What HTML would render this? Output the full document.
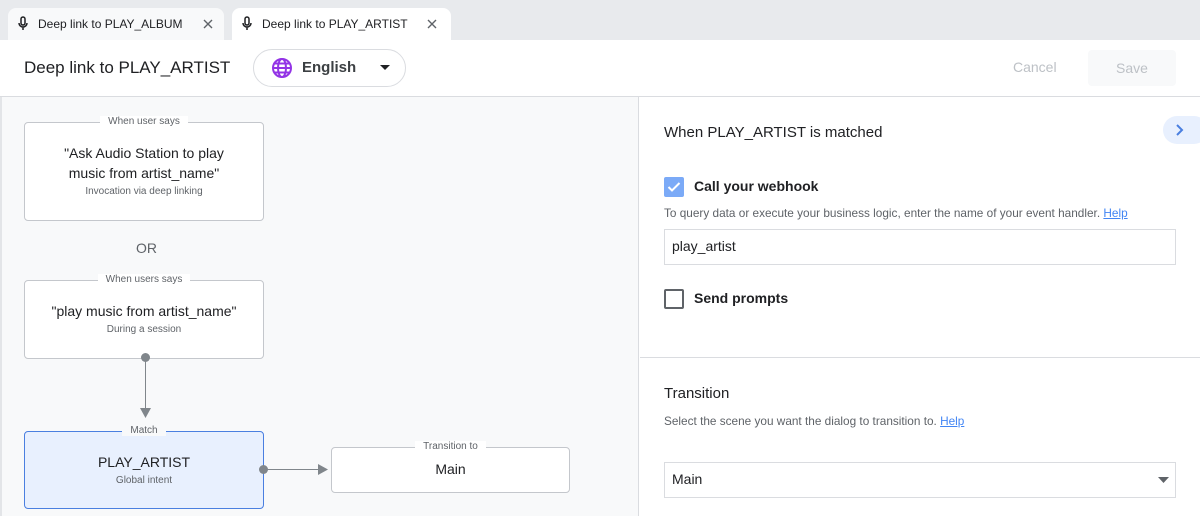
<!DOCTYPE html>
<html><head><style>
*{box-sizing:border-box;margin:0;padding:0}
body{width:1200px;height:516px;overflow:hidden;font-family:"Liberation Sans",sans-serif;color:#202124;background:#fff;position:relative}
.a{position:absolute}
.tab{position:absolute;top:8px;height:32px;border-radius:8px 8px 0 0;font-size:12px;line-height:32px;padding-left:30px}
.card{position:absolute;background:#fff;border:1px solid #c4c7cc;border-radius:4px;text-align:center}
.lbl{position:absolute;top:-7px;left:0;right:0;text-align:center;font-size:10px;color:#5f6368;line-height:12px}
.lbl span{background:#fff;padding:0 8px}
.sub{font-size:10px;color:#5f6368}
</style></head><body>
<div class="a" style="left:0;top:0;width:1200px;height:40px;background:#e8eaed"></div>
<div class="tab" style="left:8px;width:216px;background:#f8f9fa">Deep link to PLAY_ALBUM</div>
<div class="tab" style="left:232px;width:219px;background:#fff">Deep link to PLAY_ARTIST</div>
<svg class="a" style="left:17px;top:16px" width="12" height="16" viewBox="0 0 12 16"><rect x="4" y="1" width="4" height="8" rx="2" fill="none" stroke="#202124" stroke-width="1.5"/><path d="M2 7a4 4 0 0 0 8 0M6 11v3" fill="none" stroke="#202124" stroke-width="1.5"/></svg>
<svg class="a" style="left:241px;top:16px" width="12" height="16" viewBox="0 0 12 16"><rect x="4" y="1" width="4" height="8" rx="2" fill="none" stroke="#202124" stroke-width="1.5"/><path d="M2 7a4 4 0 0 0 8 0M6 11v3" fill="none" stroke="#202124" stroke-width="1.5"/></svg>
<svg class="a" style="left:202px;top:18px" width="12" height="12"><path d="M2 2l8 8M10 2l-8 8" stroke="#5f6368" stroke-width="1.4"/></svg>
<svg class="a" style="left:426px;top:18px" width="12" height="12"><path d="M2 2l8 8M10 2l-8 8" stroke="#5f6368" stroke-width="1.4"/></svg>
<div class="a" style="left:24px;top:58px;font-size:17px">Deep link to PLAY_ARTIST</div>
<div class="a" style="left:253px;top:49px;width:153px;height:38px;border:1px solid #dadce0;border-radius:19px"></div>
<svg class="a" style="left:271px;top:57px" width="22" height="22" viewBox="0 0 22 22"><g fill="none" stroke="#9334e6" stroke-width="2"><circle cx="11" cy="11" r="9"/><ellipse cx="11" cy="11" rx="4" ry="9"/><path d="M2 11h18M3.5 6.5h15M3.5 15.5h15"/></g></svg>
<div class="a" style="left:302px;top:59px;font-size:15px;font-weight:bold;color:#3c4043">English</div>
<svg class="a" style="left:379px;top:64px" width="12" height="7"><path d="M1 1h10L6 6z" fill="#202124"/></svg>
<div class="a" style="left:1013px;top:59px;font-size:14px;color:#bdc1c6">Cancel</div>
<div class="a" style="left:1088px;top:50px;width:88px;height:36px;background:#f8f9fa;border-radius:4px;font-size:14px;color:#bdc1c6;text-align:center;line-height:36px">Save</div>
<div class="a" style="left:0;top:96px;width:1200px;height:1px;background:#dadce0"></div>
<div class="a" style="left:0;top:97px;width:639px;height:419px;background:#f8f9fa;border-right:1px solid #dadce0;border-left:2px solid #e3e5e8"></div>

<div class="card" style="left:24px;top:122px;width:240px;height:99px;padding-top:20px">
<div class="lbl"><span>When user says</span></div>
<div style="font-size:14px;line-height:20px">"Ask Audio Station to play<br>music from artist_name"</div>
<div class="sub" style="margin-top:3px">Invocation via deep linking</div></div>
<div class="a" style="left:136px;top:240px;font-size:14px;color:#5f6368">OR</div>
<div class="card" style="left:24px;top:280px;width:240px;height:79px;padding-top:20px">
<div class="lbl"><span>When users says</span></div>
<div style="font-size:14px;line-height:20px">"play music from artist_name"</div>
<div class="sub" style="margin-top:3px">During a session</div></div>
<div class="a" style="left:141px;top:353px;width:9px;height:9px;border-radius:50%;background:#80868b"></div>
<div class="a" style="left:145px;top:358px;width:1px;height:54px;background:#80868b"></div>
<svg class="a" style="left:140px;top:408px" width="11" height="10"><path d="M0 0h11L5.5 10z" fill="#80868b"/></svg>
<div class="card" style="left:24px;top:431px;width:240px;height:78px;padding-top:20px;background:#e8f0fe;border-color:#4a7fe0">
<div class="lbl"><span style="background:#f8f9fa">Match</span></div>
<div style="font-size:14px;line-height:20px">PLAY_ARTIST</div>
<div class="sub" style="margin-top:3px">Global intent</div></div>
<div class="a" style="left:259px;top:465px;width:9px;height:9px;border-radius:50%;background:#80868b"></div>
<div class="a" style="left:264px;top:469px;width:58px;height:1px;background:#80868b"></div>
<svg class="a" style="left:318px;top:464px" width="10" height="11"><path d="M0 0v11l10-5.5z" fill="#80868b"/></svg>
<div class="card" style="left:331px;top:447px;width:239px;height:46px;padding-top:12px">
<div class="lbl"><span>Transition to</span></div>
<div style="font-size:14px;line-height:18px">Main</div></div>

<div class="a" style="left:664px;top:124px;font-size:15px">When PLAY_ARTIST is matched</div>
<div class="a" style="left:1163px;top:116px;width:45px;height:28px;background:#e8f0fe;border-radius:14px"></div>
<svg class="a" style="left:1175px;top:123px" width="10" height="14"><path d="M2 2l5 5-5 5" fill="none" stroke="#4a7fe0" stroke-width="2"/></svg>
<div class="a" style="left:664px;top:177px;width:20px;height:20px;background:#7baaf7;border-radius:2px"></div>
<svg class="a" style="left:664px;top:177px" width="20" height="20"><path d="M4.5 10l3.5 3.5 7.5-7.5" fill="none" stroke="#fff" stroke-width="2"/></svg>
<div class="a" style="left:694px;top:178px;font-size:14px;font-weight:bold">Call your webhook</div>
<div class="a" style="left:664px;top:206px;font-size:11.8px;color:#5f6368">To query data or execute your business logic, enter the name of your event handler. <span style="color:#4285f4;text-decoration:underline">Help</span></div>
<div class="a" style="left:664px;top:229px;width:512px;height:36px;border:1px solid #dadce0;padding:8px 7px;font-size:14px">play_artist</div>
<div class="a" style="left:664px;top:289px;width:20px;height:20px;border:2px solid #5f6368;border-radius:2px"></div>
<div class="a" style="left:694px;top:290px;font-size:14px;font-weight:bold">Send prompts</div>
<div class="a" style="left:640px;top:357px;width:560px;height:1px;background:#dadce0"></div>
<div class="a" style="left:664px;top:385px;font-size:15px">Transition</div>
<div class="a" style="left:664px;top:414px;font-size:11.8px;color:#5f6368">Select the scene you want the dialog to transition to. <span style="color:#4285f4;text-decoration:underline">Help</span></div>
<div class="a" style="left:664px;top:462px;width:512px;height:36px;border:1px solid #dadce0;padding:8px 7px;font-size:14px">Main</div>
<svg class="a" style="left:1158px;top:477px" width="11" height="6"><path d="M0 0h11L5.5 6z" fill="#5f6368"/></svg>
</body></html>
